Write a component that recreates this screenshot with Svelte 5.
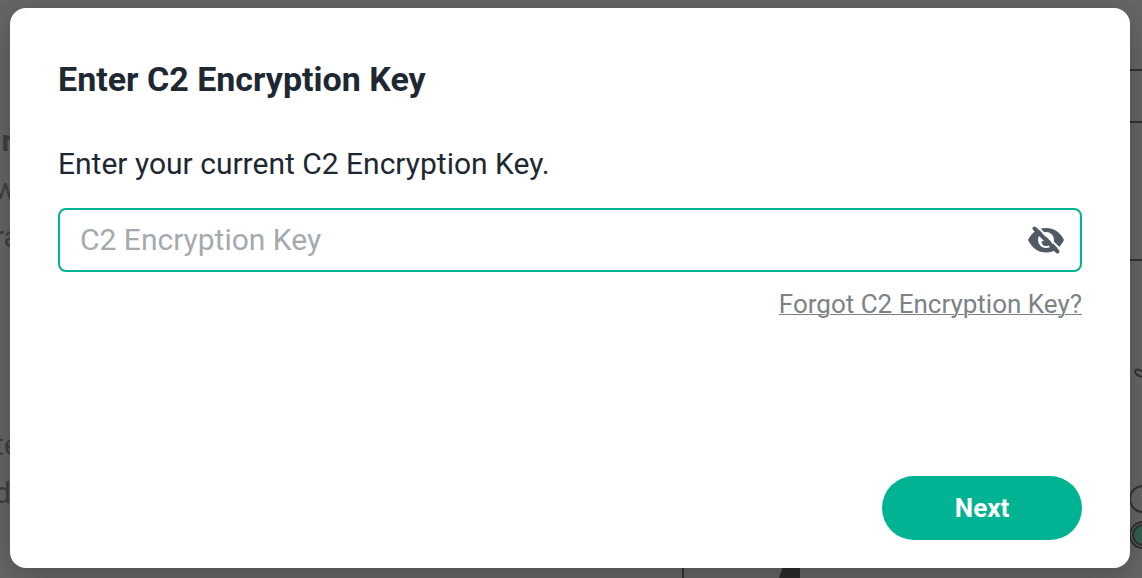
<script lang="ts">
  let key = $state('')
  let visible = $state(false)
</script>

<div class="screen">
  <div class="page" aria-hidden="true">
    <div class="copy">
      <strong>&nbsp;r</strong>
      <span>w</span>
      <span>ra</span>
    </div>
    <div class="copy">
      <span>te</span>
      <span>d</span>
    </div>
    <svg class="scene" viewBox="0 0 460 578" width="460" height="578" fill="none" stroke="#323232" stroke-width="2">
      <path d="M200 70H460M200 122H460M200 260H460M1 300V578" />
      <path d="M461 377c-5-1-8-3-8-6 1-3 5-1 8 1" />
      <path d="M103 560h15v18H97z" fill="#2b2b2b" stroke="none" />
      <circle cx="461" cy="499" r="13" />
      <circle cx="461" cy="535" r="13" />
      <circle cx="461" cy="535" r="10" fill="#345f53" />
    </svg>
  </div>

  <div class="dialog" role="dialog" aria-modal="true" aria-labelledby="dialog-title">
    <h1 id="dialog-title">Enter C2 Encryption Key</h1>
    <form onsubmit={(e) => e.preventDefault()}>
      <label for="encryption-key">Enter your current C2 Encryption Key.</label>
      <div class="field">
        <input
          id="encryption-key"
          type={visible ? 'text' : 'password'}
          placeholder="C2 Encryption Key"
          bind:value={key}
        />
        <button
          type="button"
          class="toggle"
          aria-label="Show or hide the key"
          onclick={() => (visible = !visible)}
        >
          <svg viewBox="0 0 40 40" width="40" height="40">
            <path
              fill="#505a64"
              d="M2 20C6 12 12 8 20 8s14 4 18 12c-4 8-10 12.500-18 12.500S6 28 2 20z"
            />
            <circle cx="20" cy="20" r="8" fill="#fff" />
            <path fill="#505a64" d="M15.500 21c2 1 4-1 3.500-4 4-1 6 1 6 4s-2 5-5 5-4.500-2-4.500-5z" />
            <path d="M11 6.500L33.500 28.500" stroke="#fff" stroke-width="2" />
            <path d="M8.500 8.500L31.500 31.500" stroke="#505a64" stroke-width="4" stroke-linecap="round" />
          </svg>
        </button>
      </div>
      <a href="#forgot">Forgot C2 Encryption Key?</a>
      <button type="submit" class="next">Next</button>
    </form>
  </div>
</div>

<style>
  :global(body) {
    background: #666;
    font-family: Roboto, 'Liberation Sans', sans-serif;
  }

  .screen {
    position: relative;
    display: flex;
    box-sizing: border-box;
    min-height: 100vh;
    padding: 8px 12px 10px 10px;
    overflow: hidden;
  }

  /* dimmed page under the dialog */
  .page {
    position: absolute;
    inset: 0;
    overflow: hidden;
    padding-top: 117px;
    color: #3c4043;
    font-size: 30px;
    line-height: 48px;
  }

  .copy {
    display: flex;
    flex-direction: column;
    margin: 0 0 160px -6px;
  }

  .scene {
    position: absolute;
    top: 0;
    right: 0;
  }

  .dialog {
    position: relative;
    display: flex;
    flex: 1;
    flex-direction: column;
    padding: 48px 48px 28px;
    border-radius: 16px;
    background: #fff;
    box-shadow: 0 8px 32px rgba(0, 0, 0, 0.24);
    color: #1e2832;
  }

  h1 {
    margin: 0 0 38px;
    font-size: 34px;
    font-weight: 700;
    line-height: 46px;
  }

  form {
    display: flex;
    flex: 1;
    flex-direction: column;
  }

  label {
    margin-bottom: 20px;
    font-size: 30px;
    line-height: 48px;
  }

  .field {
    display: flex;
    align-items: center;
    box-sizing: border-box;
    height: 64px;
    padding: 0 14px 0 20px;
    border: 2px solid #00b392;
    border-radius: 8px;
  }

  input {
    flex: 1;
    min-width: 0;
    height: 60px;
    padding: 0 0 2px;
    border: 0;
    outline: 0;
    background: none;
    color: inherit;
    font: inherit;
    font-size: 30px;
  }

  input::placeholder {
    color: #a5aaaf;
    opacity: 1;
  }

  .toggle {
    display: flex;
    padding: 0;
    border: 0;
    background: none;
    cursor: pointer;
  }

  a {
    align-self: flex-end;
    margin-top: 16px;
    color: #7d8287;
    font-size: 26px;
    line-height: 32px;
    text-decoration-thickness: 1px;
  }

  .next {
    align-self: flex-end;
    width: 200px;
    height: 64px;
    margin-top: auto;
    border: 0;
    border-radius: 32px;
    background: #00b392;
    color: #fff;
    font: inherit;
    font-size: 26px;
    font-weight: 700;
    cursor: pointer;
  }
</style>
